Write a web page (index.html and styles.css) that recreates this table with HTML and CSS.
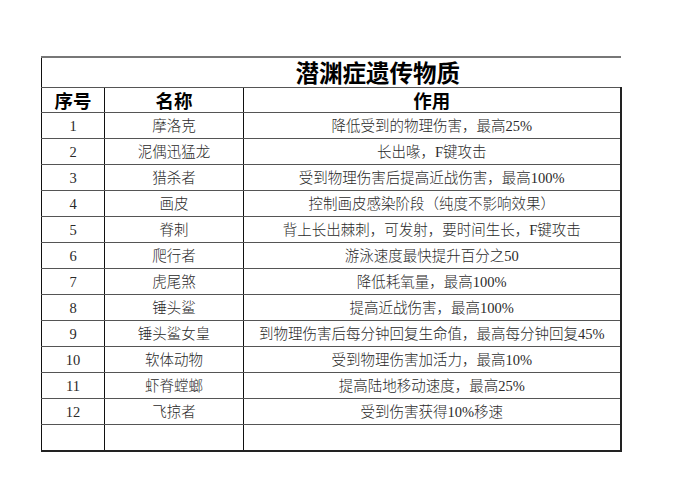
FILE: index.html
```html
<!DOCTYPE html>
<html lang="zh-CN">
<head>
<meta charset="utf-8">
<title>潜渊症遗传物质</title>
<link rel="stylesheet" href="styles.css">
</head>
<body>
<table class="sheet">
  <colgroup>
    <col class="c-no">
    <col class="c-name">
    <col class="c-effect">
  </colgroup>
  <tr class="title-row"><td colspan="3" class="title">潜渊症遗传物质</td></tr>
  <tr class="head-row"><th>序号</th><th>名称</th><th>作用</th></tr>
  <tr><td>1</td><td>摩洛克</td><td>降低受到的物理伤害，最高25%</td></tr>
  <tr><td>2</td><td>泥偶迅猛龙</td><td>长出喙，F键攻击</td></tr>
  <tr><td>3</td><td>猎杀者</td><td>受到物理伤害后提高近战伤害，最高100%</td></tr>
  <tr><td>4</td><td>画皮</td><td>控制画皮感染阶段（纯度不影响效果）</td></tr>
  <tr><td>5</td><td>脊刺</td><td>背上长出棘刺，可发射，要时间生长，F键攻击</td></tr>
  <tr><td>6</td><td>爬行者</td><td>游泳速度最快提升百分之50</td></tr>
  <tr><td>7</td><td>虎尾煞</td><td>降低耗氧量，最高100%</td></tr>
  <tr><td>8</td><td>锤头鲨</td><td>提高近战伤害，最高100%</td></tr>
  <tr><td>9</td><td>锤头鲨女皇</td><td>到物理伤害后每分钟回复生命值，最高每分钟回复45%</td></tr>
  <tr><td>10</td><td>软体动物</td><td>受到物理伤害加活力，最高10%</td></tr>
  <tr><td>11</td><td>虾脊螳螂</td><td>提高陆地移动速度，最高25%</td></tr>
  <tr><td>12</td><td>飞掠者</td><td>受到伤害获得10%移速</td></tr>
  <tr class="last-row"><td></td><td></td><td></td></tr>
</table>
</body>
</html>
```

FILE: styles.css
```css
html, body {
  margin: 0;
  padding: 0;
  background: #ffffff;
}

body {
  padding: 56px 0 0 41px;
}

.sheet {
  border-collapse: collapse;
  table-layout: fixed;
  width: 579px;
  font-family: "Liberation Serif", "Noto Sans CJK SC", serif;
  color: #2a2a2a;
}

.c-no { width: 63px; }
.c-name { width: 139px; }
.c-effect { width: 377px; }

.sheet td,
.sheet th {
  padding: 0;
  text-align: center;
  vertical-align: middle;
  white-space: nowrap;
  overflow: hidden;
  border-top: 1px solid #555;
  border-bottom: 1px solid #555;
  border-left: 1px solid #111;
  border-right: 1px solid #111;
  font-size: 14.5px;
  font-weight: 300;
  height: 25px;
  line-height: 18px;
}

.sheet tr td:last-child,
.sheet tr th:last-child {
  border-right: 2px solid #222;
}

.sheet .title-row td.title {
  height: 27px;
  border-top: 2px solid #777;
  border-right: none;
  border-left: 1px solid #111;
  padding: 0 0 2px 93px;
  vertical-align: bottom;
  overflow: visible;
  font-family: "Noto Sans CJK SC", sans-serif;
  font-weight: 700;
  font-size: 23.5px;
  line-height: 26px;
  color: #000;
}

.sheet .head-row th {
  height: 24px;
  overflow: visible;
  font-family: "Noto Sans CJK SC", sans-serif;
  font-weight: 700;
  font-size: 18.5px;
  line-height: 22px;
  color: #000;
}

.last-row td {
  border-bottom: 2px solid #222;
}
```
